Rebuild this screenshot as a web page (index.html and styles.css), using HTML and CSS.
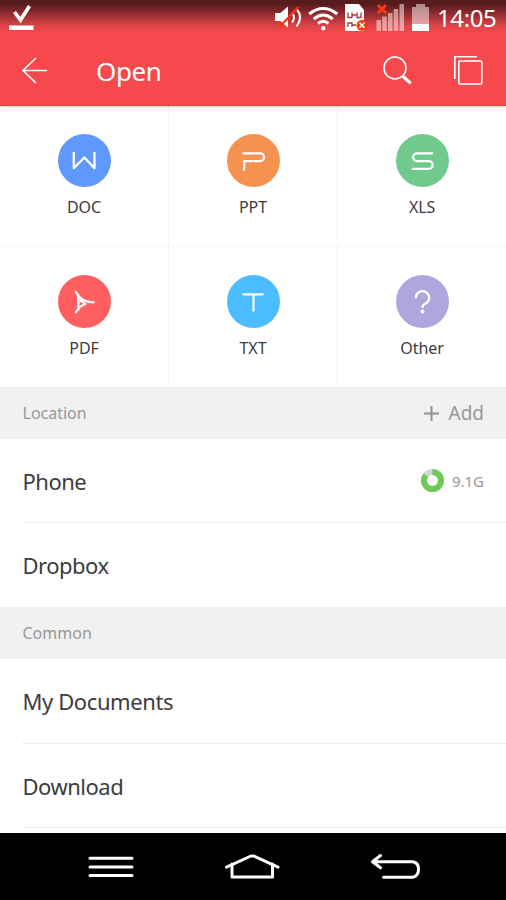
FILE: index.html
```html
<!DOCTYPE html>
<html lang="en">
<head>
<meta charset="utf-8">
<title>Open</title>
<link rel="stylesheet" href="styles.css">
</head>
<body>
<div class="screen">
  <header class="header">
    <div class="status">
      <svg class="done" width="26" height="32" viewBox="8 0 26 32"><path d="M14.500 12L20.500 20L29.500 6" fill="none" stroke="#fff" stroke-width="3.600"/><path d="M9 25.500h24.500v4.500H9z" fill="#fff"/></svg>
      <div class="status-icons">
        <svg width="29" height="34" viewBox="273 0 29 34"><path d="M274 13h5.500l7.500-6.500v21l-7.500-6.500h-5.500z" fill="#fff"/><path d="M291 12.500q4 5 0 10M295.500 9q7 8 0 17.500" fill="none" stroke="#fff" stroke-width="2"/><path d="M278.500 27L297.500 7" stroke="#ff3210" stroke-width="2.200"/></svg>
        <svg width="31" height="34" viewBox="307 0 31 34"><g fill="none" stroke="#fff" stroke-width="3"><path d="M308.200 14q14-11 28 0M312.700 19q9.500-8 19 0M317 23.500q5.200-4.500 10.400 0"/></g><circle cx="322.200" cy="28.200" r="2.200" fill="#fff"/></svg>
        <svg width="25" height="34" viewBox="344 0 25 34"><path d="M345 4h14l5 6v21h-19z" fill="#fff"/><g fill="none" stroke="#a23a3c" stroke-width="1.300"><path d="M348 12.500v5h4v-5M361 12.500v5h-4v-5M352 15h5M348 27v-4h4v4M352 25h4"/></g><circle cx="362" cy="25.300" r="5.500" fill="#fb3a13"/><path d="M359.500 22.800l5 5m0-5l-5 5" stroke="#fff" stroke-width="1.500"/></svg>
        <svg width="29" height="34" viewBox="376 0 29 34"><g fill="#fff" fill-opacity=".5"><path d="M376.500 20h4.500v11h-4.500zM382.300 16.500h4.500V31h-4.500zM388 13h4.500v18H388zM393.700 9h4.500v22h-4.500zM399.500 4h4.500v27h-4.500z"/></g><path d="M378 5l8 8m0-8l-8 8" stroke="#ff3812" stroke-width="3"/></svg>
        <svg width="18" height="34" viewBox="412 0 18 34"><path d="M416 4h9v3h4v17h-17V7h4z" fill="#fff" fill-opacity=".5"/><path d="M412 24h17v7h-17z" fill="#fff"/></svg>
        <span class="clock">14:05</span>
      </div>
    </div>
    <div class="toolbar">
      <svg width="27" height="28" viewBox="21 57 27 28"><path d="M36 58L23 70.500L36 83M23 70.500h24" fill="none" stroke="#fff" stroke-width="1.600"/></svg>
      <h1 class="title">Open</h1>
      <svg class="search" width="30" height="30" viewBox="383 56 30 30"><circle cx="395" cy="68" r="11" fill="none" stroke="#fff" stroke-width="1.600"/><path d="M402.500 76l8.300 7.300" stroke="#fff" stroke-width="3"/></svg>
      <svg width="30" height="30" viewBox="453 56 30 30"><path d="M454.800 79V56.800H477" fill="none" stroke="#fff" stroke-width="1.600"/><rect x="458.800" y="61" width="23" height="23" rx="1" fill="none" stroke="#fff" stroke-width="1.600"/></svg>
    </div>
  </header>
  <main class="content">
    <div class="types">
      <div class="type"><svg class="disc doc" viewBox="0 0 52 52"><path d="M15.500 18.500v15L25.800 23l10 10.500v-15"/></svg><span>DOC</span></div>
      <div class="type"><svg class="disc ppt" viewBox="0 0 52 52"><path d="M16 19h16.500a3.800 3.800 0 0 1 0 7.600H16.800V35"/></svg><span>PPT</span></div>
      <div class="type"><svg class="disc xls" viewBox="0 0 52 52"><path d="M35.500 19H20.600a3.800 3.800 0 0 0 0 7.600h11.600a3.800 3.800 0 0 1 0 7.600H16.500"/></svg><span>XLS</span></div>
      <div class="type"><svg class="disc pdf" viewBox="0 0 52 52"><path d="M17.500 16.500Q23 27 35 26.800M17.500 16.500Q20 19 20 26v8M17.500 36.500Q21 30.500 27 28.500L22 25"/></svg><span>PDF</span></div>
      <div class="type"><svg class="disc txt" viewBox="0 0 52 52"><path d="M16 19h19M26 19v16"/></svg><span>TXT</span></div>
      <div class="type"><svg class="disc other" viewBox="0 0 52 52"><path d="M19.500 22a6.500 6.500 0 1 1 10.500 5.500q-4 1.500-4 4"/><circle class="dot" cx="26" cy="35.800" r="1.900"/></svg><span>Other</span></div>
    </div>
    <div class="section"><span>Location</span><span class="add"><svg width="15" height="15" viewBox="0 0 15 15"><path d="M7.500 0v15M0 7.500h15" stroke="#929292" stroke-width="2"/></svg>Add</span></div>
    <div class="list">
      <div class="row"><span>Phone</span><span class="usage"><svg width="23" height="23" viewBox="0 0 23 23"><circle cx="11.500" cy="11.500" r="8.500" fill="none" stroke="#d5d5d5" stroke-width="6"/><circle cx="11.500" cy="11.500" r="8.500" fill="none" stroke="#6fcb58" stroke-width="6" pathLength="100" stroke-dasharray="86 14" transform="rotate(-90 11.500 11.500)"/></svg><span class="size">9.1G</span></span></div>
      <div class="row last"><span>Dropbox</span></div>
    </div>
    <div class="section common"><span>Common</span></div>
    <div class="list">
      <div class="row tall"><span class="wide">My Documents</span></div>
      <div class="row"><span>Download</span></div>
    </div>
  </main>
  <nav class="nav">
    <svg width="46" height="28" viewBox="88 853 46 28"><path d="M90 858.300h42M90 867h42M90 875.500h42"/></svg>
    <svg width="56" height="28" viewBox="225 853 56 28"><path d="M227.500 867.200L252 856h3l24 11.200M233 864v13h40.500v-13"/></svg>
    <svg width="52" height="30" viewBox="370 852 52 30"><path d="M380.500 855.500l-8 6.300 8 6M373 861.800h40q5.500 1 5.500 7.500t-5.500 8h-29.500"/></svg>
  </nav>
</div>
</body>
</html>
```
FILE: styles.css
```css
* { box-sizing: border-box; }
body { margin: 0; font-family: "Noto Sans", sans-serif; color: #3c3c3c; }
svg { display: block; flex: none; }
.screen { width: 506px; height: 900px; display: flex; flex-direction: column; overflow: hidden; background: #fff; }

.header { height: 106px; flex: none; color: #fff; background: linear-gradient(#551a1c 0, #5c1c1e 5px, #ac3438 18px, #e54549 27px, #f6494d 36px); border-bottom: 1px solid #e8393d; box-shadow: 0 1px 2px rgba(0, 0, 0, .2); z-index: 1; }
.status { height: 36px; display: flex; justify-content: space-between; padding: 0 9px 0 8px; }
.status-icons { display: flex; gap: 7px; }
.clock { width: 60px; font-size: 24px; line-height: 36px; letter-spacing: -.4px; }
.status-icons svg:nth-child(-n+2) { margin-right: -2px; }
.toolbar { height: 69px; display: flex; align-items: center; padding: 0 23px 0 21px; }
.title { margin: 0 0 0 48px; font-size: 26px; line-height: 36px; font-weight: 400; letter-spacing: -.4px; }
.search { margin: 0 40px 0 auto; }

.content { height: 727px; flex: none; overflow: hidden; }
.types { display: grid; grid-template-columns: 169px 169px 168px; grid-template-rows: 141px 140px; }
.type { display: flex; flex-direction: column; align-items: center; padding-top: 28px; font-size: 16px; line-height: 22px; border-right: 1px solid #f3f3f3; }
.type:nth-child(3n) { border-right: 0; }
.type:nth-child(-n+3) { border-bottom: 1px solid #f5f5f5; }
.type span { margin-top: 9px; letter-spacing: -.1px; }
.disc { width: 53px; height: 53px; border-radius: 50%; fill: none; stroke: #fff; stroke-width: 2.2; stroke-linecap: round; stroke-linejoin: round; }
.doc { background: #5f99ff; }
.ppt { background: #f6924f; }
.xls { background: #70ca8e; }
.pdf { background: #ff5f60; }
.txt { background: #4bbcff; }
.other { background: #b0a6df; }
.dot { fill: #fff; stroke: none; }

.section { height: 52px; display: flex; align-items: center; justify-content: space-between; padding: 0 22px 0 22.5px; background: #f1f1f1; color: #989898; font-size: 16px; }
.add { display: flex; align-items: center; gap: 9px; font-size: 19px; }
.list { padding-left: 22px; }
.row { height: 84px; display: flex; align-items: center; justify-content: space-between; padding: 0 22px 0 .5px; border-bottom: 1px solid #eee; font-size: 22px; letter-spacing: -.5px; }
.tall { height: 85px; }
.row .wide { letter-spacing: -.4px; }
.last { border-bottom: 0; }
.usage { display: flex; align-items: center; gap: 8px; color: #989898; font-size: 15px; letter-spacing: 0; }

.nav { height: 67px; flex: none; display: flex; align-items: center; padding: 0 84px 0 88px; justify-content: space-between; background: #000; }
.nav svg { fill: none; stroke: #fff; stroke-width: 3; stroke-linecap: round; stroke-linejoin: round; }
```
